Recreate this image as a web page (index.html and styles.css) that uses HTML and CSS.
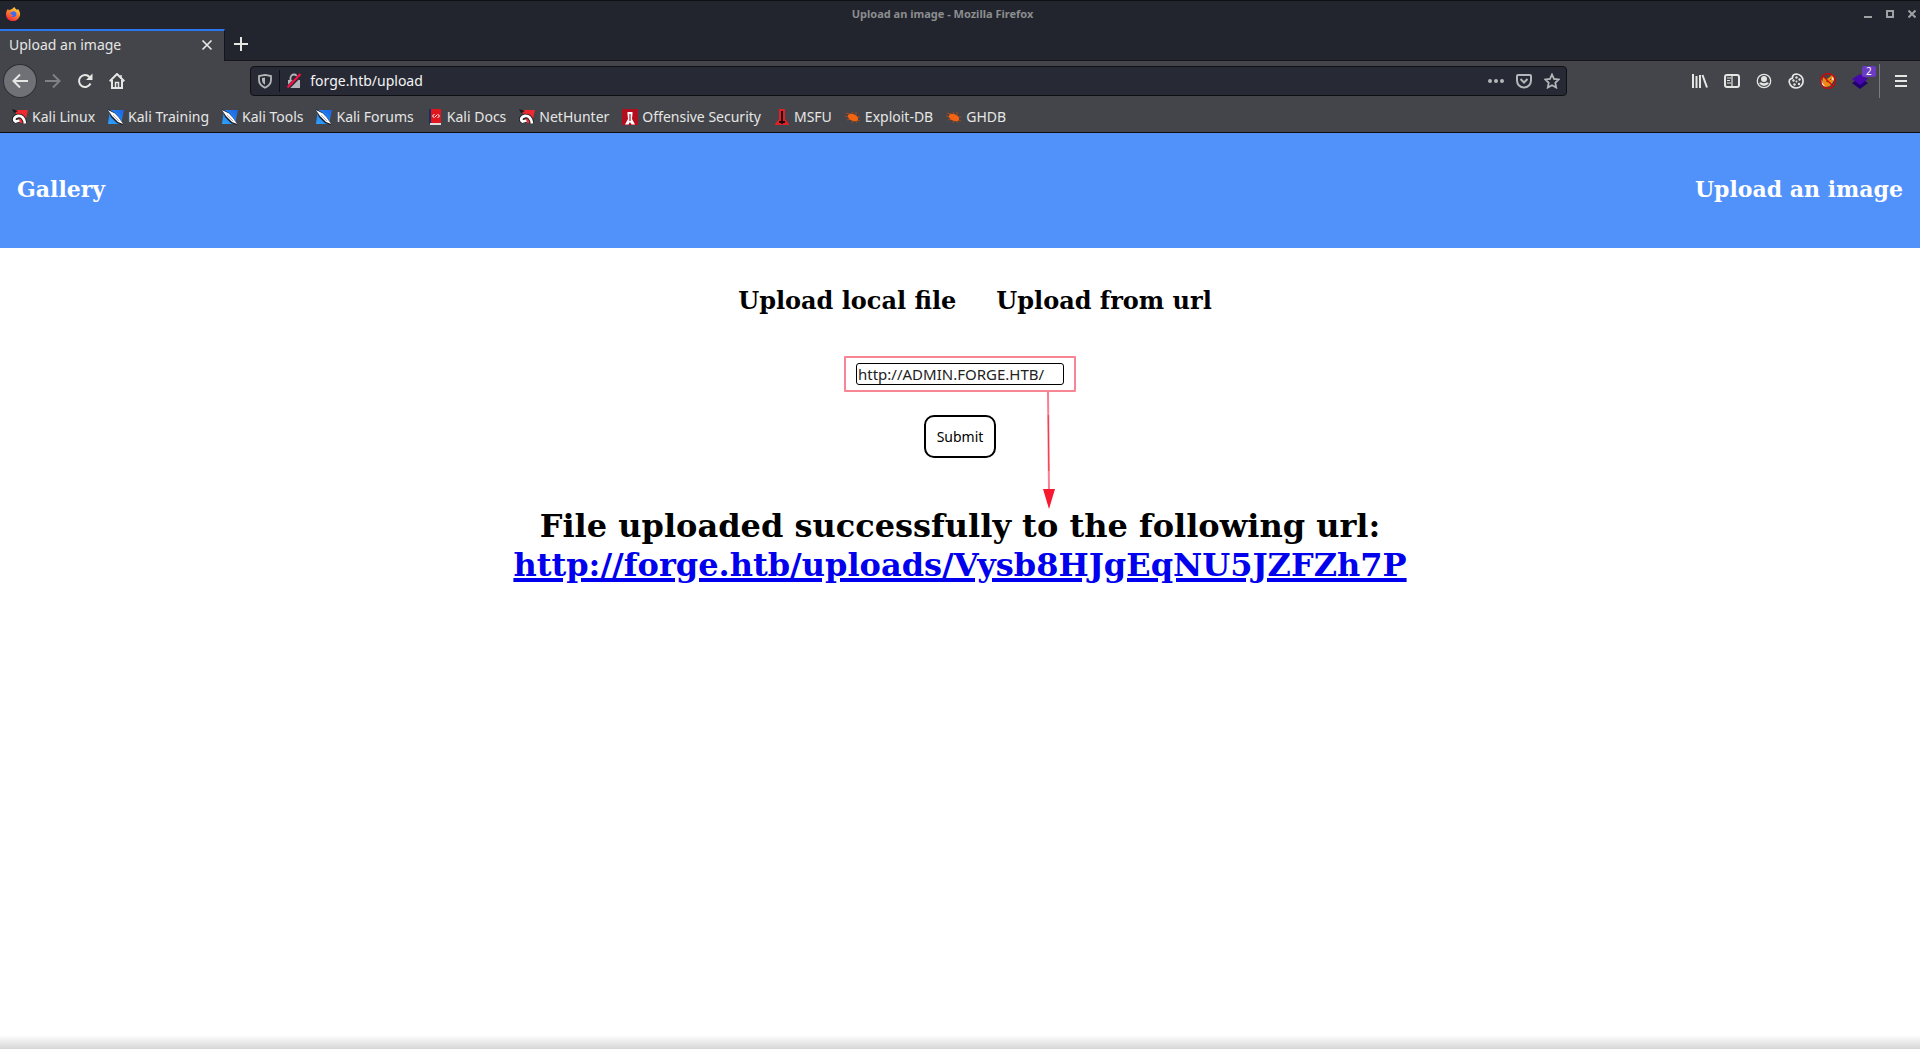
FILE: index.html
```
<!DOCTYPE html>
<html lang="en">
<head>
<meta charset="utf-8">
<title>Upload an image</title>
<link rel="stylesheet" href="styles.css">
</head>
<body>
<svg class="defs" aria-hidden="true">
  <defs>
    <linearGradient id="flame" x1="0.8" y1="0" x2="0.3" y2="1"><stop offset="0" stop-color="#ffe14a"/><stop offset="0.45" stop-color="#ff8a2b"/><stop offset="1" stop-color="#f0263f"/></linearGradient>
    <linearGradient id="blue" x1="0" y1="1" x2="1" y2="0"><stop offset="0" stop-color="#2fa4ff"/><stop offset="1" stop-color="#1a62e0"/></linearGradient>
    <symbol id="kali" viewBox="0 0 16 16"><path d="M4 1h12l-3 13H4z" fill="#ec2a30"/><path d="M0 0l6 2-4 2z" fill="#17181c"/><path d="M13 14.500C12.500 9 9.500 6.500 6 7S1 10.500 3.500 12l4-.5" fill="none" stroke="#17181c" stroke-width="4.500"/><path d="M13 14.500C12.500 9 9.500 6.500 6 7S1 10.500 3.500 12.500l4-1" fill="none" stroke="#fff" stroke-width="2.800"/></symbol>
    <symbol id="knife" viewBox="0 0 16 16"><path d="M2 1h14l-3 14H0z" fill="url(#blue)"/><path d="M0 0l7 4 5 6 3 6-6-2-6-6z" fill="#17181c"/><path d="M0 1l7 3.500 4 4.500 4 6-5-2-6-6z" fill="#fff"/><path d="M5 6l6 6" stroke="#aab" stroke-width="1"/></symbol>
    <symbol id="bug" viewBox="0 0 16 16"><path d="M1 4l4 1M0 7l4 1M2 11l4-1M7 14l1-2M7 3l1 2M11 3l0 3M15 8l-3 0M15 12l-3-1M12 14l-1-2" stroke="#a34a1c" fill="none"/><ellipse cx="8" cy="8.500" rx="5.500" ry="3.200" transform="rotate(25 8 8.500)" fill="#f26411"/></symbol>
  </defs>
</svg>
<div class="browser">
  <div class="titlebar">
    <svg class="fox" viewBox="0 0 16 16"><path d="M3 3l1 1.500C5 3.500 6 3 7 3 8 2.500 9 1 9.500 1c.5 1.500 1.500 2 2.500 3l1-1c1.500 2 2.500 4 2 6.500C14 13 11.500 15 8 15S1.500 13 1 9C.9 6.500 1.500 4.500 3 3z" fill="url(#flame)"/><path d="M5 6.500c1.500.2 2-.8 3-1.300 2.500-.2 4 1.800 3.300 4C10.500 11 8 11.500 6 10.500c1 0 1.500-.5 2-1.200C6.500 9 5.500 8 5 6.500z" fill="#3d6cf0"/></svg>
    <span class="window-title">Upload an image - Mozilla Firefox</span>
    <div class="window-buttons">
      <button aria-label="Minimize"><svg viewBox="0 0 8 8"><path d="M0 7h8" stroke-width="2"/></svg></button>
      <button aria-label="Maximize"><svg viewBox="0 0 8 8"><path d="M1 1h6v6H1z" stroke-width="2"/></svg></button>
      <button aria-label="Close"><svg viewBox="0 0 8 8"><path d="M.5.5l7 7M7.500.5l-7 7" stroke-width="2"/></svg></button>
    </div>
  </div>
  <div class="tabs">
    <div class="tab"><span>Upload an image</span><button aria-label="Close tab"><svg viewBox="0 0 12 12"><path d="M1.500 1.500l9 9M10.500 1.500l-9 9" stroke-width="1.700"/></svg></button></div>
    <button class="new-tab" aria-label="New tab"><svg viewBox="0 0 14 14"><path d="M7 0v14M0 7h14" stroke-width="2"/></svg></button>
  </div>
  <div class="navbar">
    <div class="nav-buttons">
      <button class="back" aria-label="Back"><svg viewBox="0 0 16 16"><path d="M16 8H1.500M8 1.500L1.500 8 8 14.500" stroke-width="2"/></svg></button>
      <button class="forward" aria-label="Forward"><svg viewBox="0 0 16 16"><path d="M0 8h14.500M8 1.500L14.500 8 8 14.500" stroke-width="2"/></svg></button>
      <button aria-label="Reload"><svg viewBox="0 0 16 16"><path d="M13.500 10.500A6 6 0 1 1 12.500 4" stroke-width="2"/><path d="M15.500.5v6.500H9z" class="solid"/></svg></button>
      <button aria-label="Home"><svg viewBox="0 0 16 16"><path d="M.7 8.300L8 1l7.300 7.300M3 7v8h10V7M3 15h10" stroke-width="2"/><path d="M6.500 15V9.500h3V15" stroke-width="1.500"/><path d="M12 2v4" stroke-width="1.500"/></svg></button>
    </div>
    <div class="spring"></div>
    <div class="urlbar">
      <svg viewBox="0 0 16 16"><path d="M8 1.800L14 3v4c0 3.500-2.300 6-6 7.800C4.300 13 2 10.500 2 7V3z" stroke-width="1.800"/><path d="M8 4.500v7.300C6 10.500 5 9 5 7V5z" class="solid"/></svg>
      <span class="divider"></span>
      <svg viewBox="0 0 16 16"><path d="M4.500 8V5a3.500 3.500 0 0 1 7 0v3" stroke-width="1.800"/><path d="M2 7h12v8H2z" class="solid"/><path d="M1 15.500L15.500 1" stroke="#272935" stroke-width="4"/><path d="M1.500 14.500L14.500 1" stroke="#ff0f43" stroke-width="2"/></svg>
      <input type="text" aria-label="Address" value="forge.htb/upload">
      <button aria-label="Page actions"><svg viewBox="0 0 16 16"><circle cx="2" cy="8" r="2" class="solid"/><circle cx="8" cy="8" r="2" class="solid"/><circle cx="14" cy="8" r="2" class="solid"/></svg></button>
      <button aria-label="Save to Pocket"><svg viewBox="0 0 16 16"><path d="M2 2h12q1 0 1 1v4.500a7 7 0 0 1-14 0V3q0-1 1-1z" stroke-width="2"/><path d="M4.500 6L8 9.500 11.500 6" stroke-width="2"/></svg></button>
      <button aria-label="Bookmark"><svg viewBox="0 0 16 16"><path d="M8 1.500l2 4.400 4.800.6-3.500 3.300.9 4.700L8 12.200l-4.200 2.300.9-4.700L1.200 6.500 6 5.900z" stroke-width="1.800"/></svg></button>
    </div>
    <div class="spring"></div>
    <div class="tools">
      <button aria-label="Library"><svg viewBox="0 0 16 16"><path d="M1 1v14M4.500 3v12M8 2v13M10.500 2L15 14.500" stroke-width="2"/></svg></button>
      <button aria-label="Sidebars"><svg viewBox="0 0 16 16"><rect x="1" y="2" width="14" height="12" rx="2" stroke-width="2"/><path d="M8 2v12M3 5h4M3 7.500h3M3 10h4" stroke-width="1.200"/></svg></button>
      <button aria-label="Account"><svg viewBox="0 0 16 16"><circle cx="8" cy="8" r="6.700" stroke-width="1.300"/><circle cx="8" cy="6" r="3" class="solid"/><path d="M3 10l2-.8q3 2 6 0l2 .8q-2 3-5 3t-5-3z" class="solid"/></svg></button>
      <button aria-label="Cookies"><svg viewBox="0 0 16 16"><path d="M8.500 1a7 7 0 1 1-7.300 8C1 7 2 6 3 5.500c1 .5 2-.5 1.500-2C5 2 7 1 8.500 1z" stroke-width="1.700"/><g class="solid"><circle cx="8.500" cy="4.500" r="1.200"/><circle cx="5.500" cy="7.500" r="1.200"/><circle cx="11.500" cy="6.500" r="1.200"/><circle cx="8.500" cy="8.500" r="1"/><circle cx="6.500" cy="11.500" r="1.200"/><circle cx="11" cy="11" r="1.200"/></g></svg></button>
      <button aria-label="FoxyProxy"><svg viewBox="0 0 16 16"><path d="M3 4l4 2 3-2 2-3 2 3-1 5-3 4-4 1-4-2z" fill="#f08a12" stroke="none"/><path d="M1.500 4l1 6 3 4-4-2zM13 3l1 5-2-2z" fill="#fff" stroke="none"/><path d="M6 8l2 1M10 7l1-1" stroke="#703b10"/><circle cx="8" cy="8" r="7.300" stroke="#c80b0b" stroke-width="1.400"/><path d="M3 3l10 10" stroke="#c80b0b" stroke-width="1.200"/></svg></button>
      <button aria-label="Wappalyzer"><svg viewBox="0 0 16 16"><path d="M0 10l8-5 8 5-8 6z" fill="#210070" stroke="none"/><path d="M0 6l8-5 8 5-8 6z" fill="#4608ad" stroke="none"/></svg><span class="badge">2</span></button>
      <span class="tool-line"></span>
      <button aria-label="Menu"><svg viewBox="0 0 16 16"><path d="M2 3h12M2 8h12M2 13h12" stroke-width="2"/></svg></button>
    </div>
  </div>
  <nav class="bookmarks" aria-label="Bookmarks">
    <a href="#"><svg><use href="#kali"/></svg>Kali Linux</a>
    <a href="#"><svg><use href="#knife"/></svg>Kali Training</a>
    <a href="#"><svg><use href="#knife"/></svg>Kali Tools</a>
    <a href="#"><svg><use href="#knife"/></svg>Kali Forums</a>
    <a href="#"><svg viewBox="0 0 16 16"><path d="M2 0h12v14H2z" fill="#e1151b"/><path d="M2 0h2v15H2z" fill="#17305f"/><path d="M3 14h11v2H3z" fill="#ddd"/><path d="M7.500 5l-2 2 2 2M10.500 5l2 2-2 2M8 8l2-2" stroke="#fff" fill="none"/></svg>Kali Docs</a>
    <a href="#"><svg><use href="#kali"/></svg>NetHunter</a>
    <a href="#"><svg viewBox="0 0 16 16"><path d="M0 0h16v16H0z" fill="#b40d1e"/><path d="M5.500 3h5v2l-.5 5 3 5.500H9.500L8 13l-1.500 2.500H3L6 10l-.5-5z" fill="#fff"/><path d="M8 5v7" stroke="#b40d1e" stroke-width="1.200"/></svg>Offensive Security</a>
    <a href="#"><svg viewBox="0 0 16 16"><path d="M5 0h6v10l4 5v1H1v-1l4-5z" fill="#df2027"/><path d="M8 2v13M5 13h6" stroke="#210609" stroke-width="2"/></svg>MSFU</a>
    <a href="#"><svg><use href="#bug"/></svg>Exploit-DB</a>
    <a href="#"><svg><use href="#bug"/></svg>GHDB</a>
  </nav>
</div>
<header class="site-header">
  <a href="#">Gallery</a>
  <a href="#">Upload an image</a>
</header>
<main>
  <div class="modes"><a href="#">Upload local file</a><a href="#">Upload from url</a></div>
  <form>
    <div class="url-field">
      <input type="text" aria-label="Image url" value="http://ADMIN.FORGE.HTB/">
      <svg class="arrow" viewBox="0 0 12 118" aria-hidden="true"><path d="M5 0L6 100" stroke="#f88090" stroke-width="2"/><path d="M5.300 24L5.800 80" stroke="#f4384c"/><path d="M0 98h12L6 118z" fill="#f6192f"/></svg>
    </div>
    <button class="submit" type="button">Submit</button>
  </form>
  <h1>File uploaded successfully to the following url:<br><a href="#">http://forge.htb/uploads/Vysb8HJgEqNU5JZFZh7P</a></h1>
</main>
<div class="bottom-shade"></div>
</body>
</html>
```
FILE: styles.css
```
* { box-sizing: border-box; }
body {
  margin: 0;
  min-height: 100vh;
  display: flex;
  flex-direction: column;
  background: #fff;
  color: #000;
  font-family: "DejaVu Serif", serif;
}
button { padding: 0; border: 0; background: none; color: inherit; font: inherit; }
.defs { position: absolute; width: 0; height: 0; }

/* browser frame */
.browser {
  background: #43454b;
  color: #e6e6e4;
  font: 14px/20px "Noto Sans", sans-serif;
  border-top: 1px solid #101115;
  border-bottom: 1px solid #0c0c0d;
}
.browser button { display: flex; align-items: center; justify-content: center; }
.browser button svg, .urlbar > svg { width: 16px; height: 16px; fill: none; stroke: currentColor; }
.browser svg .solid { fill: currentColor; stroke: none; }

.titlebar {
  display: flex;
  align-items: center;
  height: 28px;
  padding: 0 4px 2px 5px;
  background: #23252e;
}
.fox { width: 16px; height: 16px; }
.window-title { flex: 1; color: #8b8d8f; font-size: 11px; font-weight: 700; line-height: 16px; text-align: center; }
.window-buttons { display: flex; gap: 14px; color: #a0a1a5; }
.browser .window-buttons svg { width: 8px; height: 8px; }

.tabs { display: flex; height: 32px; background: #23252e; box-shadow: inset 0 -1px #15161b; }
.tab {
  display: flex;
  align-items: center;
  justify-content: space-between;
  width: 225px;
  padding: 0 11px 3px 9px;
  border-top: 2px solid #2b78f0;
  border-right: 1px solid #15161b;
  background: #43454b;
}
.browser .tab svg { width: 12px; height: 12px; }
.new-tab { width: 32px; padding-bottom: 2px; }
.browser .new-tab svg { width: 14px; height: 14px; }

.navbar { display: flex; align-items: center; height: 39px; }
.nav-buttons { display: flex; align-items: center; width: 134px; padding-left: 4px; }
.nav-buttons button { width: 32px; height: 32px; }
.nav-buttons .back { margin-right: 1px; border-radius: 50%; background: #707176; box-shadow: 0 0 0 1px #2e3036; }
.nav-buttons .forward { color: #808185; }
.spring { flex: 4; }
.urlbar {
  flex: 45;
  display: flex;
  align-items: center;
  height: 30px;
  padding: 0 0 0 6px;
  border: 1px solid #0f1013;
  border-radius: 4px;
  background: #272935;
  color: #b5b6b9;
}
.divider { width: 1px; height: 22px; margin: 0 6px; background: #0f1013; }
.urlbar input {
  flex: 1;
  min-width: 0;
  margin-left: 8px;
  padding: 1px 0 0;
  border: 0;
  background: none;
  color: #f4f4f4;
  font: inherit;
}
.urlbar button { width: 28px; height: 28px; }
.tools { display: flex; align-items: center; width: 237px; padding-left: 1px; }
.tools button { position: relative; width: 32px; height: 32px; }
.badge {
  position: absolute;
  top: 1px;
  right: 0;
  width: 14px;
  height: 11px;
  border-radius: 2px;
  background: #6b3cc2;
  color: #fff;
  font-size: 10px;
  line-height: 11px;
}
.tool-line { width: 1px; height: 34px; margin: 0 5px 0 3px; background: #7a7c81; }

.bookmarks { display: flex; align-items: center; gap: 13px; height: 32px; padding: 1px 12px 0; }
.bookmarks a { display: flex; align-items: center; gap: 4px; color: inherit; text-decoration: none; white-space: nowrap; }
.bookmarks svg { width: 16px; height: 16px; }

/* site */
.site-header {
  display: flex;
  align-items: center;
  justify-content: space-between;
  height: 115px;
  padding: 0 17px 4px;
  background: #5191fa;
}
.site-header a { color: #fff; font-size: 22px; font-weight: 700; text-decoration: none; }
main { flex: 1; text-align: center; }
.modes { display: flex; justify-content: center; gap: 40px; padding: 38px 0 0 30px; }
.modes a { color: #000; font-size: 24px; font-weight: 700; line-height: 30px; text-decoration: none; }
form { display: flex; flex-direction: column; align-items: center; gap: 23px; padding-top: 40px; }
.url-field { position: relative; padding: 5px 10px; border: 2px solid #f88593; border-radius: 1px; }
.url-field input {
  display: block;
  width: 208px;
  height: 22px;
  padding: 0 1px;
  border: 1px solid #000;
  border-radius: 3px;
  color: #222;
  font: 15px "Noto Sans", sans-serif;
}
.arrow { position: absolute; top: 33px; right: 19px; width: 12px; height: 118px; }
.submit { width: 72px; height: 43px; border: 2px solid #000; border-radius: 10px; font: 14px "Noto Sans", sans-serif; }
h1 { margin: 49px 0 0; font-size: 32px; line-height: 39px; }
h1 a { color: #00e; text-decoration-thickness: 4px; }
.bottom-shade { height: 14px; background: linear-gradient(#fff, #d6d6d6); }
```
